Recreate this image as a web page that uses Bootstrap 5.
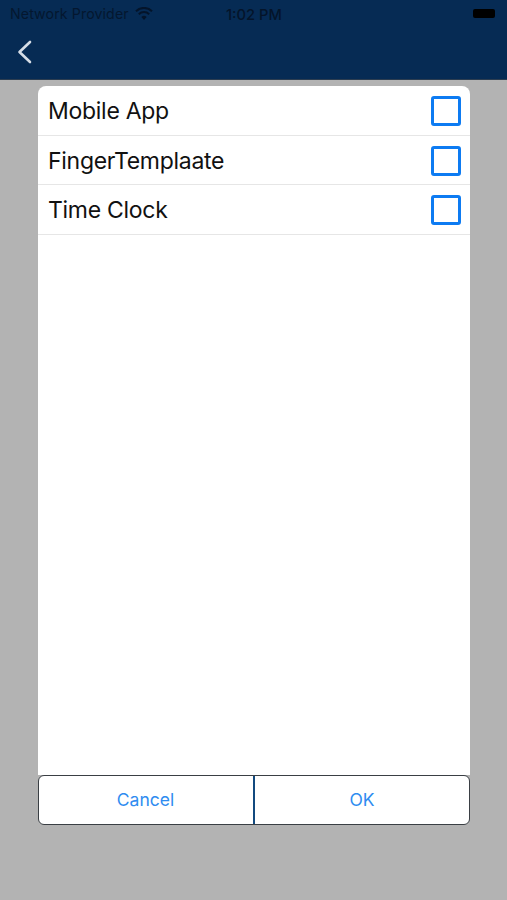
<!DOCTYPE html>
<html lang="en">
<head>
<meta charset="utf-8">
<title>Select</title>
<link rel="stylesheet" href="https://cdn.jsdelivr.net/npm/bootstrap@5.3.0/dist/css/bootstrap.min.css">
<style>
html,body{height:100%;}
body{background:#b3b3b3;font-family:"Inter","Liberation Sans",sans-serif;width:507px;height:900px;overflow:hidden;}
.app-head{height:80px;background:#062b54;border-bottom:1px solid #2c3d50;}
.status-row{height:28px;padding:0 12px 0 10px;color:#04142a;font-size:14.2px;position:relative;}
.status-time{position:absolute;left:226px;top:4px;font-size:14.7px;font-weight:500;color:#04142a;}
.carrier{letter-spacing:.1px;font-weight:400;color:#04172f;}
.wifi-mark{margin-left:2px;}
.batt{width:22px;height:9px;background:#000;border-radius:2px;margin-top:-2px;}
.back-row{height:51px;padding-left:16px;padding-bottom:4px;}
.sheet{margin:6px 37px 0 38px;height:739px;}
.sheet-list{height:689px;background:#fff;border-radius:8px 8px 0 0;}
.opt-row{height:49.5px;padding:2px 9px 0 10px;border-bottom:1px solid #e6e6e6;font-size:23px;color:#111;letter-spacing:-.28px;}
.tick-box{width:30px;height:30px;border:3px solid #0d7bf2;border-radius:3px;background:#fff;}
.sheet-foot{height:50px;background:#fff;border:1.5px solid #3a3f44;border-radius:6px;overflow:hidden;}
.foot-btn{color:#2f8cf0;font-size:17.5px;line-height:1;}
.foot-cancel{flex:0 0 214px;padding-right:1px;}
.foot-ok{flex:1 1 0;border-left:2px solid #134a7f;}
</style>
</head>
<body>
<header class="app-head">
  <div class="status-row d-flex align-items-center justify-content-between">
    <div class="d-flex align-items-center gap-1">
      <span class="carrier">Network Provider</span>
      <svg class="wifi-mark" width="18" height="14" viewBox="0 0 18 14" aria-hidden="true"><path d="M9 13 6.4 10a3.6 3.6 0 0 1 5.2 0Z" fill="#04142a"/><path d="M3.8 7.2a7.4 7.4 0 0 1 10.4 0" fill="none" stroke="#04142a" stroke-width="2"/><path d="M1 4.2a11.4 11.4 0 0 1 16 0" fill="none" stroke="#04142a" stroke-width="2"/></svg>
    </div>
    <span class="status-time">1:02 PM</span>
    <span class="batt"></span>
  </div>
  <div class="back-row d-flex align-items-center">
    <svg width="16" height="26" viewBox="0 0 16 26" aria-hidden="true"><path d="M14 3 3.5 13 14 23" fill="none" stroke="#d5dde6" stroke-width="2.6" stroke-linecap="round" stroke-linejoin="round"/></svg>
  </div>
</header>
<main class="sheet d-flex flex-column">
  <div class="sheet-list">
    <div class="opt-row d-flex align-items-center justify-content-between"><span>Mobile App</span><span class="tick-box"></span></div>
    <div class="opt-row d-flex align-items-center justify-content-between"><span>FingerTemplaate</span><span class="tick-box"></span></div>
    <div class="opt-row d-flex align-items-center justify-content-between"><span>Time Clock</span><span class="tick-box"></span></div>
  </div>
  <div class="sheet-foot d-flex">
    <div class="foot-btn foot-cancel d-flex align-items-center justify-content-center">Cancel</div>
    <div class="foot-btn foot-ok d-flex align-items-center justify-content-center">OK</div>
  </div>
</main>
<script src="https://cdn.jsdelivr.net/npm/bootstrap@5.3.0/dist/js/bootstrap.bundle.min.js"></script>
</body>
</html>
